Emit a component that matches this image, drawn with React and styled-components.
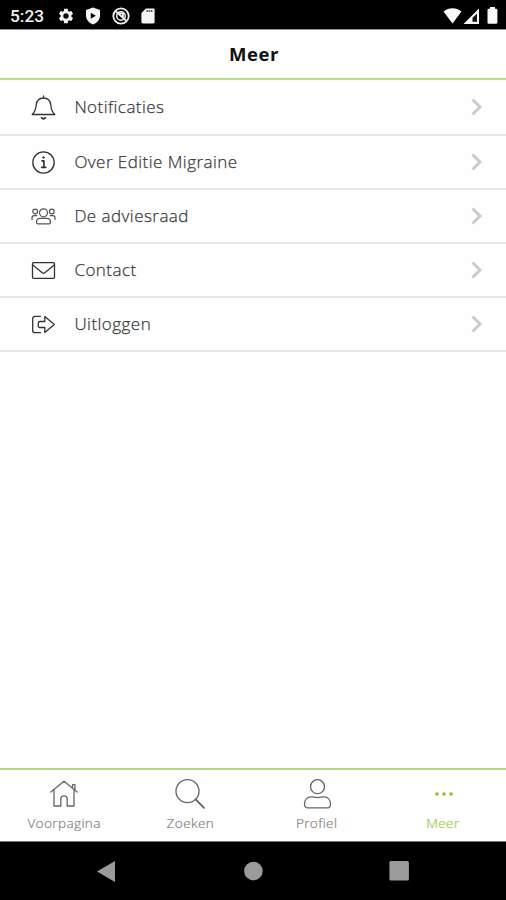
import React from "react";
import styled, { createGlobalStyle } from "styled-components";

const GlobalStyle = createGlobalStyle`
  *, *::before, *::after { box-sizing: border-box; }
  body { margin: 0; background: #fff; }
`;

const Screen = styled.div`
  display: flex;
  flex-direction: column;
  width: 506px;
  height: 900px;
  overflow: hidden;
  background: #fefefe;
  font-family: "Open Sans", "Noto Sans", sans-serif;
`;

const StatusBar = styled.div`
  display: flex;
  align-items: center;
  height: 30px;
  flex: none;
  padding: 2px 6px 0 10px;
  background: #000;
  border-bottom: 1px solid #8c8c8c;
`;

const Clock = styled.span`
  width: 47px;
  color: #f0f0f0;
  font: 500 17.3px/20px Roboto, sans-serif;
`;

const StatusIcons = styled.div`
  display: flex;
  align-items: center;
  gap: ${(p) => p.$gap}px;
  margin-left: ${(p) => (p.$end ? "auto" : "0")};
`;

const Glyph = styled.svg`
  display: block;
  flex: none;
  overflow: visible;
`;

const LineGlyph = styled(Glyph)`
  fill: none;
  stroke: currentColor;
  stroke-width: ${(p) => p.$weight || 1.3};
  stroke-linecap: round;
  stroke-linejoin: round;
`;

const Header = styled.header`
  display: flex;
  align-items: center;
  justify-content: center;
  height: 50px;
  flex: none;
  border-bottom: 2px solid #badb89;
`;

const Title = styled.h1`
  margin: 0;
  padding-left: 2px;
  color: #111;
  font-size: 18.5px;
  line-height: 24px;
  font-weight: 700;
  letter-spacing: 0.6px;
`;

const Menu = styled.ul`
  display: flex;
  flex-direction: column;
  flex: 1;
  margin: 0;
  padding: 0;
  list-style: none;
`;

const MenuRow = styled.li`
  display: flex;
  align-items: center;
  height: 54px;
  padding: 0 24px 0 31px;
  color: #333;
  border-bottom: 2px solid #e6e6e6;

  &:first-child {
    height: 56px;
  }
`;

const MenuLabel = styled.span`
  flex: 1;
  margin-left: 18.4px;
  color: #3a3a3a;
  font-size: 17px;
  font-weight: 300;
  line-height: 24px;
  letter-spacing: 0.46px;
  -webkit-text-stroke: 0.25px currentColor;
`;

const TabBar = styled.nav`
  display: grid;
  grid-template-columns: repeat(4, 1fr);
  height: 73px;
  flex: none;
  padding-left: 1px;
  border-top: 2px solid #b5d884;
`;

const Tab = styled.div`
  display: flex;
  flex-direction: column;
  align-items: center;
  padding-top: 9px;
  color: ${(p) => (p.$active ? "#8fc31f" : "#666")};
`;

const TabLabel = styled.span`
  margin-top: 4px;
  color: ${(p) => (p.$active ? "#95cc40" : "#808080")};
  font-size: 13.6px;
  font-weight: 300;
  line-height: 18px;
  letter-spacing: 0.37px;
  -webkit-text-stroke: 0.2px currentColor;
`;

const SystemBar = styled.div`
  display: flex;
  align-items: center;
  justify-content: space-between;
  height: 59px;
  flex: none;
  padding: 0 97px;
  background: #000;
  border-top: 1px solid #777;
`;

const Chevron = () => (
  <LineGlyph width="11" height="18" viewBox="0 0 11 18" $weight="3" color="#cbcbcb">
    <path d="M1.5 1.5 L9 9 L1.5 16.5" strokeLinecap="butt" strokeLinejoin="miter" />
  </LineGlyph>
);

const menuItems = [
  {
    label: "Notificaties",
    icon: (
      <>
        <path d="M12.5.8v2M1.5 19c2.700-2 3.200-4 3.700-9C5.700 5.500 8.500 3 12.500 3s6.800 2.500 7.300 7c.5 5 1 7 3.700 9" />
        <path d="M10.500 22.800 12.500 24l2-1.200" strokeWidth="1.700" />
        <path d="M1.500 19.500h22" strokeWidth="1.700" />
      </>
    ),
  },
  {
    label: "Over Editie Migraine",
    icon: (
      <>
        <circle cx="12.5" cy="12.5" r="10.7" />
        <path d="M11 10.800h1.900v6.400M10.700 17.300h4" strokeWidth="1.700" />
        <circle cx="12.500" cy="7.500" r=".8" fill="currentColor" strokeWidth="1" />
      </>
    ),
  },
  {
    label: "De adviesraad",
    icon: (
      <g strokeWidth="1.2" stroke="#555">
        <circle cx="12.5" cy="8.8" r="4" />
        <circle cx="4.2" cy="7.5" r="2.4" />
        <circle cx="20.8" cy="7.5" r="2.4" />
        <path d="M8.800 14.300h7.400c2.200 0 3.300 1.600 3.300 4 0 1-.5 1.600-1.400 1.600H6.900c-.9 0-1.400-.6-1.400-1.600 0-2.400 1.100-4 3.300-4ZM1 15.400v-1.500c0-1.300.8-2.200 2-2.200h2.800M24 15.400v-1.500c0-1.300-.8-2.200-2-2.200h-2.800" />
      </g>
    ),
  },
  {
    label: "Contact",
    icon: (
      <>
        <rect x="1.5" y="4.7" width="22" height="15.6" rx="1" />
        <path d="m1.800 7.100 9.400 7.700c.8.7 1.800.7 2.600 0l9.400-7.700" />
      </>
    ),
  },
  {
    label: "Uitloggen",
    icon: (
      <>
        <path d="M9.500 4.300H4c-1.500 0-2.300.8-2.300 2.300v11.800c0 1.500.8 2.300 2.300 2.300h5.500" />
        <path d="M8.800 9.500h5V4.600l9.500 7.900-9.500 7.900v-4.900h-5c-1 0-1.500-.5-1.500-1.500v-3c0-.9.5-1.500 1.500-1.500Z" />
      </>
    ),
  },
];

const tabs = [
  {
    label: "Voorpagina",
    icon: (
      <path d="M1.800 13 15 2.200 28.200 13M5 10.700V27h6.800v-7.200c0-2 1-3 3.200-3s3.200 1 3.200 3V27H25V10.700M23.500 9V5.700h2.400V11" />
    ),
  },
  {
    label: "Zoeken",
    icon: (
      <>
        <circle cx="12.500" cy="12.200" r="11.500" />
        <path d="m20.700 20.500 8.300 8.300" strokeWidth="1.800" />
      </>
    ),
  },
  {
    label: "Profiel",
    icon: (
      <>
        <circle cx="15.500" cy="7.700" r="7" />
        <path d="M9 17.800c2.500 0 3.500.8 6.500.8s4-.8 6.500-.8c4 0 6.500 3 6.500 7.400 0 2.400-1 3.600-2.800 3.600H5.300c-1.800 0-2.800-1.200-2.800-3.600 0-4.400 2.500-7.400 6.500-7.400Z" />
      </>
    ),
  },
  {
    label: "Meer",
    active: true,
    icon: (
      <g fill="currentColor" stroke="none">
        <circle cx="9" cy="15" r="1.800" />
        <circle cx="16" cy="15" r="1.800" />
        <circle cx="23" cy="15" r="1.800" />
      </g>
    ),
  },
];

export default function App() {
  return (
    <Screen>
      <GlobalStyle />
      <StatusBar>
        <Clock>5:23</Clock>
        <StatusIcons $gap={9.3}>
          <Glyph width="18" height="18" viewBox="0 0 24 24" fill="#f5f5f5">
            <path d="M19.140 12.940c.04-.3.06-.61.06-.94 0-.32-.02-.64-.07-.94l2.030-1.580c.18-.14.23-.41.12-.61l-1.920-3.320c-.12-.22-.37-.29-.59-.22l-2.390.96c-.5-.38-1.030-.7-1.620-.94l-.36-2.540c-.04-.24-.24-.41-.48-.41h-3.840c-.24 0-.43.17-.47.41l-.36 2.540c-.59.24-1.130.57-1.620.94l-2.390-.96c-.22-.08-.47 0-.59.22L2.740 8.870c-.12.21-.08.47.12.61l2.030 1.580c-.05.3-.09.63-.09.94s.02.64.07.94l-2.030 1.580c-.18.14-.23.41-.12.61l1.920 3.320c.12.22.37.29.59.22l2.390-.96c.5.38 1.030.7 1.620.94l.36 2.540c.05.24.24.41.48.41h3.840c.24 0 .44-.17.47-.41l.36-2.540c.59-.24 1.130-.56 1.620-.94l2.390.96c.22.08.47 0 .59-.22l1.920-3.320c.12-.22.07-.47-.12-.61zM12 15.600a3.600 3.600 0 1 1 0-7.200 3.600 3.600 0 0 1 0 7.200z" />
          </Glyph>
          <Glyph width="18" height="18" viewBox="0 0 18 18">
            <path d="M9 .5 16 3v5.500c0 4-2.700 7.300-7 9-4.300-1.700-7-5-7-9V3Z" fill="#f5f5f5" />
            <path d="m6.800 5.800 5 3-5 3Z" fill="#000" />
          </Glyph>
          <LineGlyph width="18" height="18" viewBox="0 0 18 18" color="#f0f0f0" $weight="1.8">
            <circle cx="9" cy="9" r="7.700" />
            <circle cx="9" cy="9" r="4.300" strokeWidth="1.500" />
            <path d="m4.500 5 9 8M8 6.300h3v3" />
          </LineGlyph>
          <Glyph width="18" height="18" viewBox="0 0 18 18">
            <path d="M7 1.500h7.200c.9 0 1.400.5 1.400 1.400v12.200c0 .9-.5 1.400-1.400 1.400H3.800c-.9 0-1.400-.5-1.400-1.400V6Z" fill="#f5f5f5" />
            <path d="M7.500 4h6" stroke="#555" strokeWidth="2" strokeDasharray="1.500 .7" />
          </Glyph>
        </StatusIcons>
        <StatusIcons $gap={2.5} $end>
          <Glyph width="19" height="16" viewBox="0 0 18 16">
            <path d="M0 3.600C5-.9 13-.9 18 3.600L9 15.500Z" fill="#fafafa" />
          </Glyph>
          <Glyph width="16" height="16" viewBox="0 0 16 16">
            <path d="M-1.500 16 14 .5V16Z" fill="#fafafa" />
            <path d="M12 5.500v8.300H7.500v-4Z" fill="#111" />
          </Glyph>
          <Glyph width="17" height="17" viewBox="0 0 17 17">
            <path d="M7 0h5v1.800h1c.9 0 1.400.5 1.400 1.400v12.400c0 .7-.4 1.100-1.100 1.100H5.600c-.7 0-1.100-.4-1.100-1.100V3.200c0-.9.5-1.400 1.400-1.400H7Z" fill="#fafafa" />
          </Glyph>
        </StatusIcons>
      </StatusBar>
      <Header>
        <Title>Meer</Title>
      </Header>
      <Menu>
        {menuItems.map((item) => (
          <MenuRow key={item.label}>
            <LineGlyph width="25" height="25" viewBox="0 0 25 25">
              {item.icon}
            </LineGlyph>
            <MenuLabel>{item.label}</MenuLabel>
            <Chevron />
          </MenuRow>
        ))}
      </Menu>
      <TabBar>
        {tabs.map((tab) => (
          <Tab key={tab.label} $active={tab.active}>
            <LineGlyph width="30" height="31" viewBox="0 0 30 31">
              {tab.icon}
            </LineGlyph>
            <TabLabel $active={tab.active}>{tab.label}</TabLabel>
          </Tab>
        ))}
      </TabBar>
      <SystemBar>
        <Glyph width="20" height="21" viewBox="0 0 20 21">
          <path d="M0 10.500 18 0v21Z" fill="#9b9b9b" />
        </Glyph>
        <Glyph width="20" height="20" viewBox="0 0 20 20">
          <circle cx="10.400" cy="10" r="9.300" fill="#9b9b9b" />
        </Glyph>
        <Glyph width="20" height="20" viewBox="0 0 20 20">
          <rect x=".4" width="19.500" height="19.500" rx="1.500" fill="#9b9b9b" />
        </Glyph>
      </SystemBar>
    </Screen>
  );
}
